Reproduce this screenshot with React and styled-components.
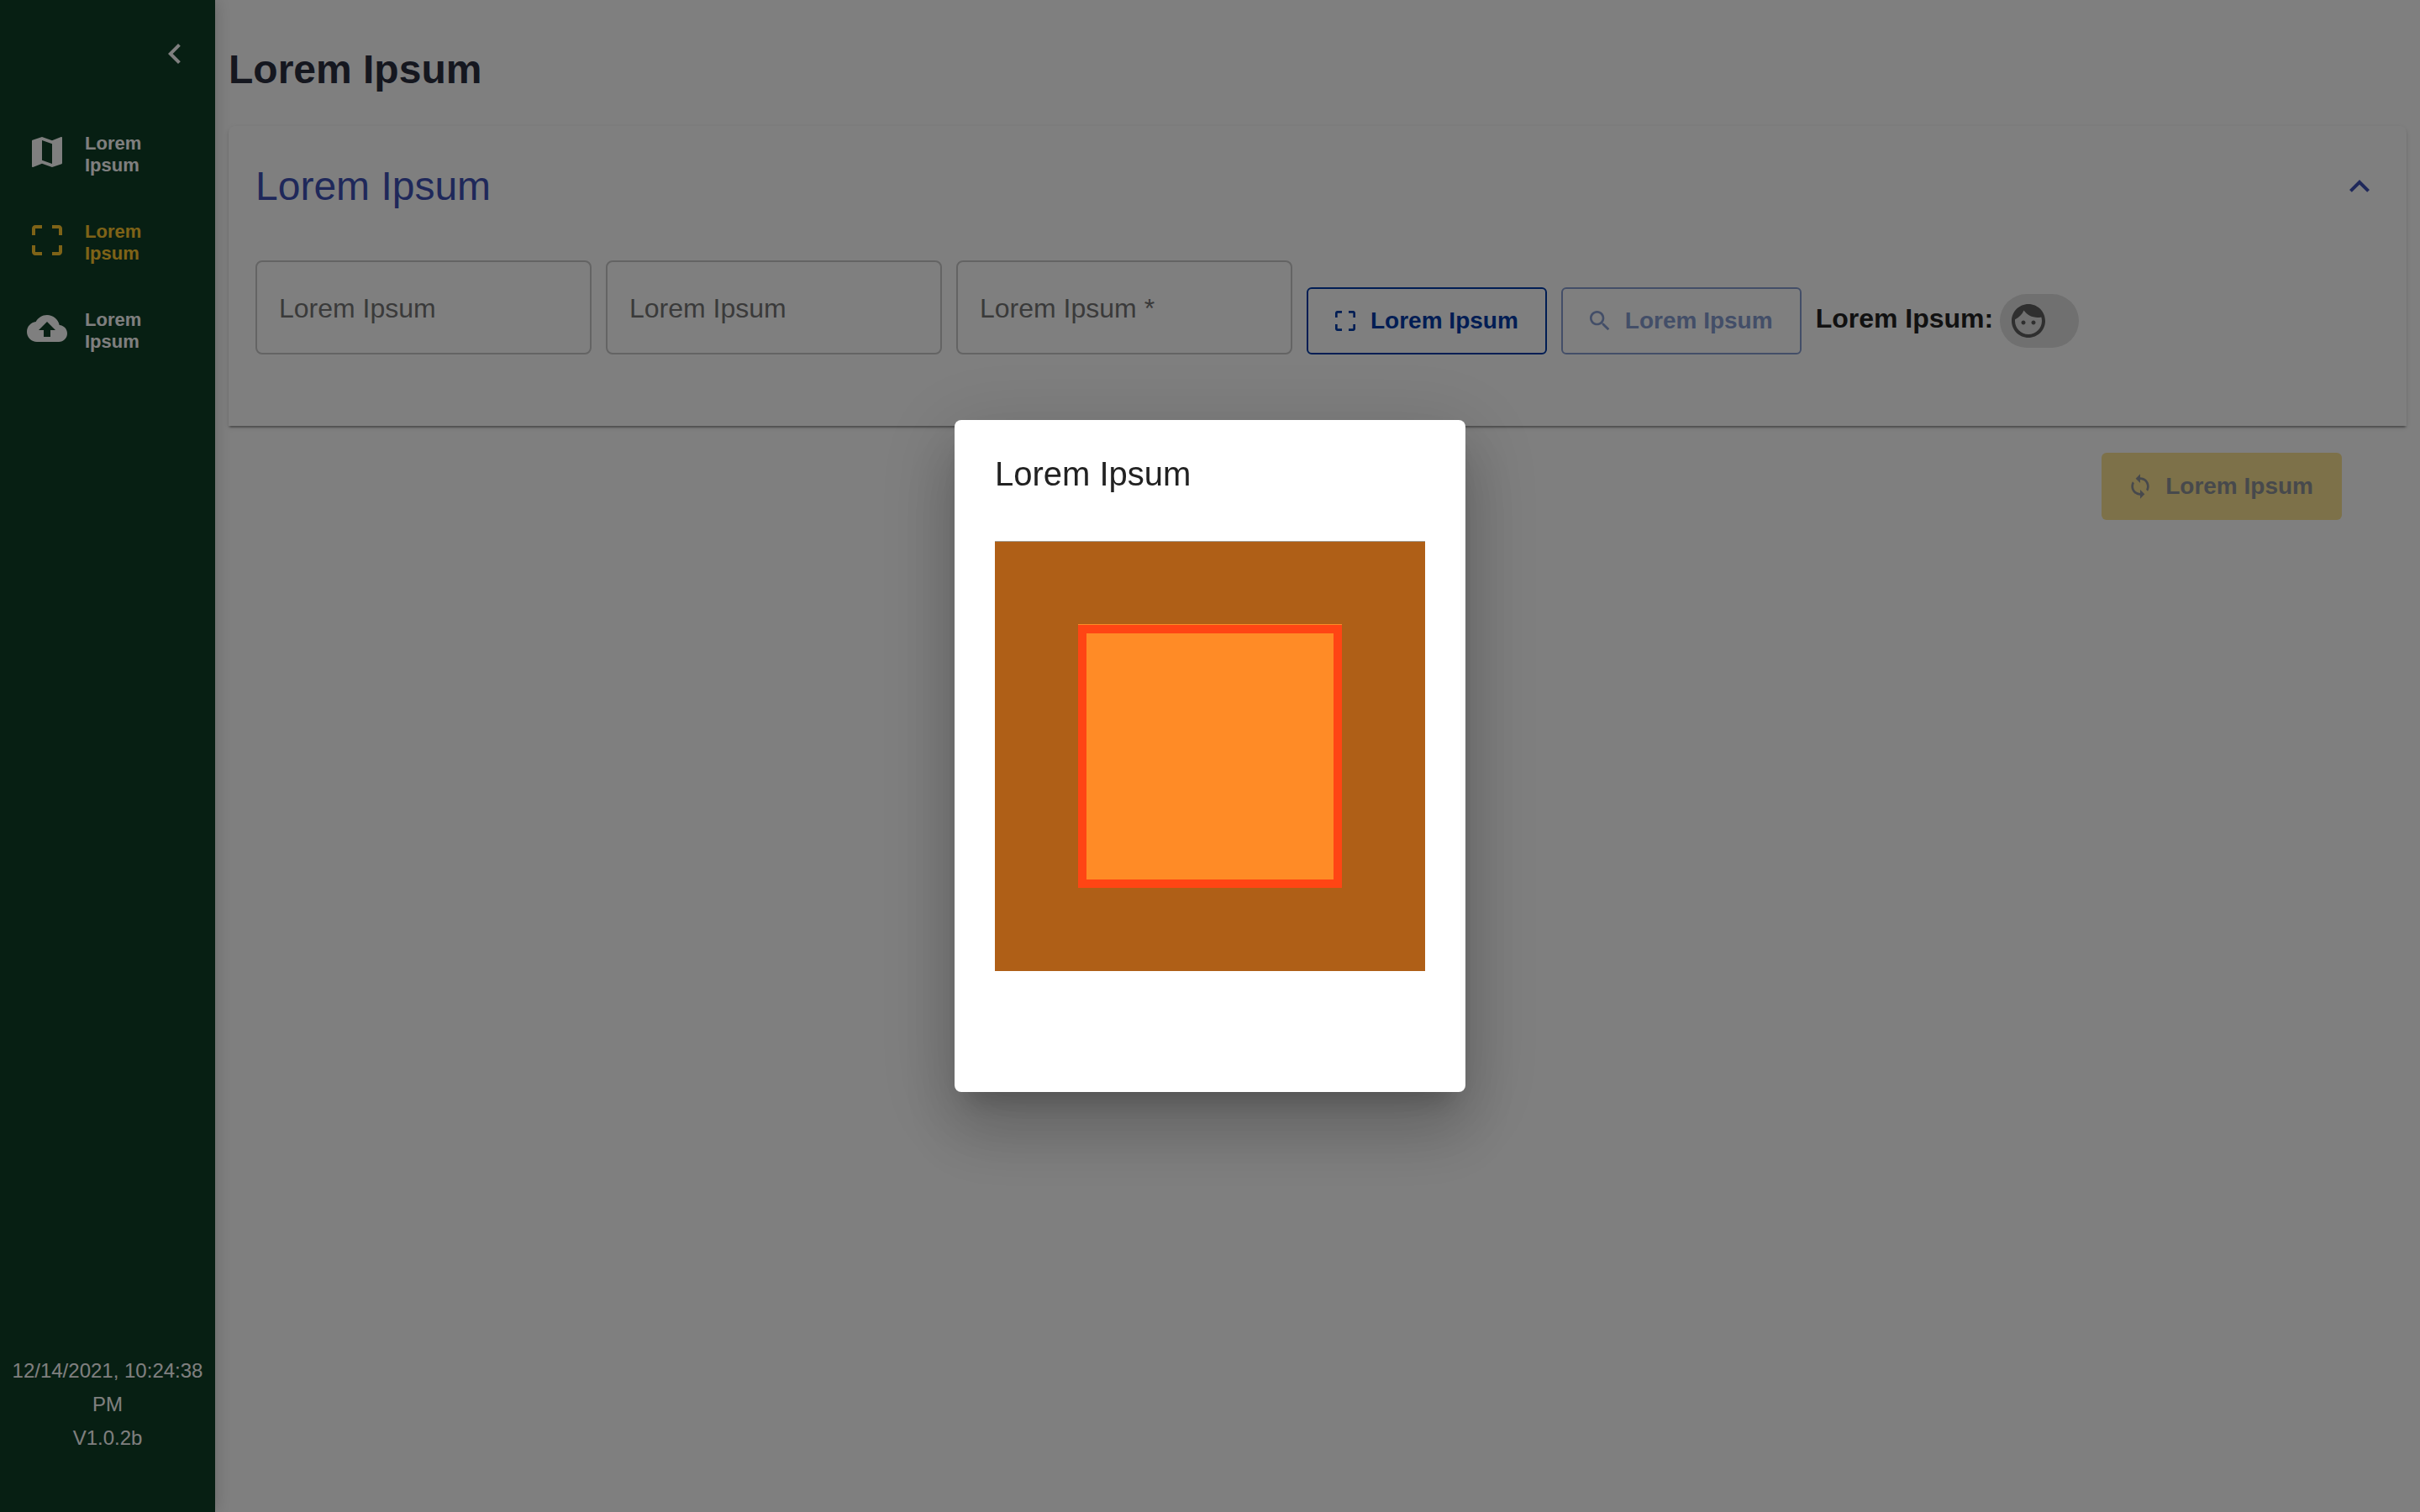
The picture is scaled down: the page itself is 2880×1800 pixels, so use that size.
import React, { useState } from "react";
import styled, { createGlobalStyle, css } from "styled-components";

const GlobalStyle = createGlobalStyle`
  *, *::before, *::after { box-sizing: border-box; }
  body {
    margin: 0;
    background: #fff;
    color: #222;
    font-family: "Liberation Sans", Arial, Helvetica, sans-serif;
  }
  button, input { font: inherit; }
`;

const Shell = styled.div`
  display: flex;
  min-height: 100vh;
`;

const Sidebar = styled.aside`
  display: flex;
  flex-direction: column;
  flex: none;
  width: 256px;
  padding: 40px 0 68px;
  background: #0f3f26;
  color: #fff;
  box-shadow: 0 0 20px rgba(0, 0, 0, 0.2);
`;

const CollapseButton = styled.button`
  display: flex;
  align-self: flex-end;
  margin-right: 24px;
  padding: 0;
  border: 0;
  background: none;
  color: inherit;
`;

const NavList = styled.nav`
  display: flex;
  flex-direction: column;
  gap: 52px;
  margin-top: 69px;
  padding-left: 32px;
`;

const NavLink = styled.a`
  display: flex;
  align-items: flex-start;
  gap: 21px;
  color: ${(p) => (p.$active ? "#fdc62f" : "#fff")};
  font-size: 22px;
  font-weight: 700;
  line-height: 26px;
  text-decoration: none;
`;

const NavLabel = styled.span`
  width: 80px;
  padding-top: 1px;
`;

const SidebarFooter = styled.footer`
  margin-top: auto;
  font-size: 24px;
  line-height: 40px;
  text-align: center;
`;

const FooterLine = styled.div`
  padding: 0 8px;
`;

const Content = styled.main`
  flex: 1;
  min-width: 0;
  padding: 48px 16px;
`;

const PageTitle = styled.h1`
  margin: 0 0 32px;
  color: #2a2e3e;
  font-size: 48px;
  line-height: 70px;
`;

const Panel = styled.section`
  padding: 32px 32px 85px;
  border-radius: 8px 8px 0 0;
  background: #fff;
  box-shadow: 0 4px 2px -2px rgba(0, 0, 0, 0.2),
    0 2px 2px rgba(0, 0, 0, 0.14), 0 2px 6px rgba(0, 0, 0, 0.12);
`;

const PanelHeader = styled.button`
  display: flex;
  justify-content: space-between;
  align-items: center;
  width: 100%;
  padding: 0;
  border: 0;
  background: none;
  color: #3f51b5;
  font-size: 48px;
  line-height: 80px;
`;

const FilterRow = styled.form`
  display: flex;
  flex-wrap: wrap;
  align-items: flex-end;
  gap: 17px;
  margin-top: 48px;
`;

const FieldInput = styled.input`
  display: block;
  width: 400px;
  height: 112px;
  padding: 2px 26px 0;
  border: 2px solid #c8c8c8;
  border-radius: 8px;
  outline: 0;
  background: transparent;
  font-size: 32px;
  &::placeholder { color: #757575; opacity: 1; }
`;

const filled = css`
  border-color: transparent;
  background: #fae293;
  color: #8f9299;
`;

const ActionButton = styled.button`
  display: flex;
  align-items: center;
  gap: 14px;
  height: 80px;
  padding: 0 32px 0 28px;
  border: 2px solid currentColor;
  border-radius: 6px;
  background: transparent;
  color: #003aa8;
  font-size: 28px;
  font-weight: 700;
  &:disabled { color: #869dd0; }
  ${(p) => p.$filled && css`&:disabled { ${filled} }`}
`;

const ToggleGroup = styled.div`
  display: flex;
  align-items: flex-start;
  gap: 8px;
  padding-bottom: 8px;
  color: #222;
  font-size: 32px;
  font-weight: 700;
  line-height: 58px;
`;

const FaceChip = styled.button`
  display: flex;
  align-items: center;
  width: 94px;
  height: 64px;
  padding: 0 10px;
  border: 0;
  border-radius: 32px;
  background: #e0e0e0;
  color: #5e5e5e;
`;

const ActionsRow = styled.div`
  display: flex;
  justify-content: flex-end;
  padding: 32px 77px 0 0;
`;

const Backdrop = styled.div`
  position: fixed;
  inset: 0;
  display: flex;
  align-items: center;
  justify-content: center;
  background: rgba(0, 0, 0, 0.5);
`;

const Dialog = styled.div`
  display: flex;
  flex-direction: column;
  width: 608px;
  min-height: 800px;
  padding: 48px;
  border-radius: 8px;
  background: #fff;
  box-shadow: 0 22px 30px -14px rgba(0, 0, 0, 0.2),
    0 48px 76px 6px rgba(0, 0, 0, 0.14), 0 18px 92px 16px rgba(0, 0, 0, 0.12);
`;

const DialogTitle = styled.h2`
  margin: 0 0 64px;
  color: #222;
  font-size: 40px;
  font-weight: 400;
  line-height: 32px;
`;

const Viewfinder = styled.div`
  display: flex;
  aspect-ratio: 1;
  padding: 99px;
  border-top: 1px solid #a39b90;
  background: #af5f17;
`;

const ScanArea = styled.div`
  flex: 1;
  border: 10px solid #ff4514;
  background: #ff8b26;
  box-shadow: 0 -1px #ff8b26;
`;

const ICONS = {
  chevronLeft: "M15.41 7.41L14 6l-6 6 6 6 1.41-1.41L10.83 12z",
  chevronUp: "M12 8l-6 6 1.41 1.41L12 10.83l4.59 4.58L18 14z",
  map: "M20.5 3l-.16.03L15 5.1 9 3 3.36 4.9c-.21.07-.36.25-.36.48V20.5c0 .28.22.5.5.5l.16-.03L9 18.9l6 2.1 5.64-1.9c.21-.07.36-.25.36-.48V3.5c0-.28-.22-.5-.5-.5zM15 19l-6-2.11V5l6 2.11V19z",
  scan: "M3 5v4h2V5h4V3H5c-1.1 0-2 .9-2 2zm2 10H3v4c0 1.1.9 2 2 2h4v-2H5v-4zm14 4h-4v2h4c1.1 0 2-.9 2-2v-4h-2v4zm0-16h-4v2h4v4h2V5c0-1.1-.9-2-2-2z",
  upload: "M19.35 10.04C18.67 6.59 15.64 4 12 4 9.11 4 6.6 5.64 5.35 8.04 2.34 8.36 0 10.91 0 14c0 3.31 2.69 6 6 6h13c2.76 0 5-2.24 5-5 0-2.64-2.05-4.78-4.65-4.96zM14 13v4h-4v-4H7l5-5 5 5h-3z",
  search: "M15.5 14h-.79l-.28-.27C15.41 12.59 16 11.11 16 9.5 16 5.91 13.09 3 9.5 3S3 5.91 3 9.5 5.91 16 9.5 16c1.61 0 3.09-.59 4.23-1.57l.27.28v.79l5 4.99L20.49 19l-4.99-5zm-6 0C7.01 14 5 11.99 5 9.5S7.01 5 9.5 5 14 7.01 14 9.5 11.99 14 9.5 14z",
  sync: "M12 4V1L8 5l4 4V6c3.31 0 6 2.69 6 6 0 1.01-.25 1.97-.7 2.8l1.46 1.46C19.54 15.03 20 13.57 20 12c0-4.42-3.58-8-8-8zm0 14c-3.31 0-6-2.69-6-6 0-1.01.25-1.97.7-2.8L5.24 7.74C4.46 8.97 4 10.43 4 12c0 4.42 3.58 8 8 8v3l4-4-4-4v3z",
  face: "M9 11.75c-.69 0-1.25.56-1.25 1.25s.56 1.25 1.25 1.25 1.25-.56 1.25-1.25-.56-1.25-1.25-1.25zm6 0c-.69 0-1.25.56-1.25 1.25s.56 1.25 1.25 1.25 1.25-.56 1.25-1.25-.56-1.25-1.25-1.25zM12 2C6.48 2 2 6.48 2 12s4.48 10 10 10 10-4.48 10-10S17.52 2 12 2zm0 18c-4.41 0-8-3.59-8-8 0-.29.02-.58.05-.86 2.36-1.05 4.23-2.98 5.21-5.37C11.07 8.33 14.05 10 17.42 10c.78 0 1.53-.09 2.25-.26.21.71.33 1.47.33 2.26 0 4.41-3.59 8-8 8z",
};

function Icon({ name, size = 48 }) {
  return (
    <svg width={size} height={size} viewBox="0 0 24 24" fill="currentColor" aria-hidden="true">
      <path d={ICONS[name]} />
    </svg>
  );
}

const NAV = [
  { icon: "map" },
  { icon: "scan", active: true },
  { icon: "upload" },
];

const FIELDS = ["Lorem Ipsum", "Lorem Ipsum", "Lorem Ipsum *"];

export default function App() {
  const [values, setValues] = useState(["", "", ""]);
  const update = (index, value) =>
    setValues((prev) => prev.map((v, i) => (i === index ? value : v)));

  return (
    <>
      <GlobalStyle />
      <Shell>
        <Sidebar>
          <CollapseButton type="button">
            <Icon name="chevronLeft" />
          </CollapseButton>
          <NavList>
            {NAV.map((item) => (
              <NavLink key={item.icon} href="#" $active={item.active}>
                <Icon name={item.icon} />
                <NavLabel>Lorem Ipsum</NavLabel>
              </NavLink>
            ))}
          </NavList>
          <SidebarFooter>
            <FooterLine>12/14/2021, 10:24:38 PM</FooterLine>
            <FooterLine>V1.0.2b</FooterLine>
          </SidebarFooter>
        </Sidebar>
        <Content>
          <PageTitle>Lorem Ipsum</PageTitle>
          <Panel>
            <PanelHeader type="button">
              <span>Lorem Ipsum</span>
              <Icon name="chevronUp" />
            </PanelHeader>
            <FilterRow>
              {FIELDS.map((label, i) => (
                <FieldInput
                  key={i}
                  aria-label={label}
                  placeholder={label}
                  value={values[i]}
                  onChange={(e) => update(i, e.target.value)}
                />
              ))}
              <ActionButton type="button">
                <Icon name="scan" size={32} />
                Lorem Ipsum
              </ActionButton>
              <ActionButton type="button" disabled>
                <Icon name="search" size={32} />
                Lorem Ipsum
              </ActionButton>
              <ToggleGroup>
                <span id="face-label">Lorem Ipsum:</span>
                <FaceChip type="button" aria-labelledby="face-label">
                  <Icon name="face" />
                </FaceChip>
              </ToggleGroup>
            </FilterRow>
          </Panel>
          <ActionsRow>
            <ActionButton type="button" disabled $filled>
              <Icon name="sync" size={32} />
              Lorem Ipsum
            </ActionButton>
          </ActionsRow>
        </Content>
      </Shell>
      <Backdrop>
        <Dialog role="dialog" aria-modal="true" aria-labelledby="dialog-title">
          <DialogTitle id="dialog-title">Lorem Ipsum</DialogTitle>
          <Viewfinder>
            <ScanArea />
          </Viewfinder>
        </Dialog>
      </Backdrop>
    </>
  );
}
